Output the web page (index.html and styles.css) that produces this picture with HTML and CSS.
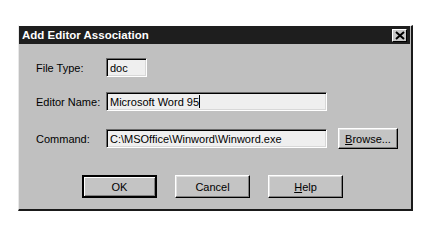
FILE: index.html
```html
<!DOCTYPE html>
<html lang="en">
<head>
  <meta charset="UTF-8" />
  <title>Add Editor Association</title>
  <link rel="stylesheet" href="styles.css">
</head>
<body>

  <div class="dialog">
    <div class="titlebar">
      <span class="titulo">Add Editor Association</span>
      <span class="fechar">
        <svg width="10" height="9" viewBox="0 0 10 9">
          <path d="M1 1L9 8M9 1L1 8" stroke="#000" stroke-width="2"/>
        </svg>
      </span>
    </div>

    <div class="corpo">
      <div class="linha l1">
        <span class="label">File Type:</span>
        <span class="campo curto">doc</span>
      </div>
      <div class="linha l2">
        <span class="label">Editor Name:</span>
        <span class="campo longo">Microsoft Word 95<i class="cursor"></i></span>
      </div>
      <div class="linha l3">
        <span class="label">Command:</span>
        <span class="campo longo">C:\MSOffice\Winword\Winword.exe</span>
        <span class="botao browse"><u>B</u>rowse...</span>
      </div>

      <div class="botoes">
        <span class="botao padrao">OK</span>
        <span class="botao">Cancel</span>
        <span class="botao"><u>H</u>elp</span>
      </div>
    </div>
  </div>

</body>
</html>
```

FILE: styles.css
```css
* { box-sizing: border-box; }
body {
  margin: 0;
  background: #fff;
  font-family: "Liberation Sans", Arial, sans-serif;
  font-size: 11px;
  color: #000;
}
.dialog {
  margin: 25px 0 0 18px;
  width: 395px;
  height: 186px;
  background: #c0c0c0;
  border-style: solid;
  border-width: 1px 2px 2px 1px;
  border-color: #fff #1a1a1a #1a1a1a #e8e8e8;
  padding: 0 1px 0 0;
}
.titlebar {
  height: 18px;
  background: #1e1e1e;
  display: flex;
  align-items: center;
  justify-content: space-between;
  padding: 0 3px 0 3px;
}
.titulo   { color: #fff; font-weight: bold; font-size: 11.5px; }
.fechar {
  width: 15px; height: 13px;
  background: #c8c8c8;
  border: 1px solid; border-color: #fff #000 #000 #fff;
  display: flex; align-items: center; justify-content: center;
}
.corpo    { padding: 0 0 0 17px; }
.linha    { display: flex; align-items: center; height: 21px; }
.l1       { margin-top: 13px; }
.l2       { margin-top: 13px; }
.l3       { margin-top: 16px; }
.label    { width: 70px; }
.campo {
  height: 19px;
  background: #efefef;
  border: 1px solid; border-color: #6a6a6a #fff #fff #6a6a6a;
  box-shadow: inset 1px 1px #000, inset -1px -1px #d8d8d8;
  padding: 0 0 0 3px;
  display: flex; align-items: center;
}
.curto    { width: 41px; }
.longo    { width: 221px; }
.cursor   { display: inline-block; width: 1px; height: 13px; background: #000; }
.botao {
  width: 75px; height: 23px;
  background: #c4c4c4;
  border: 1px solid; border-color: #fff #000 #000 #fff;
  box-shadow: inset -1px -1px #808080, inset 1px 1px #e0e0e0;
  display: flex; align-items: center; justify-content: center;
}
.browse   { width: 60px; height: 21px; margin-left: 11px; }
.botoes   { display: flex; gap: 18px; margin: 26px 0 0 46px; }
.padrao   { border: 2px solid #000; box-shadow: inset 1px 1px #fff, inset -1px -1px #808080; }
```
